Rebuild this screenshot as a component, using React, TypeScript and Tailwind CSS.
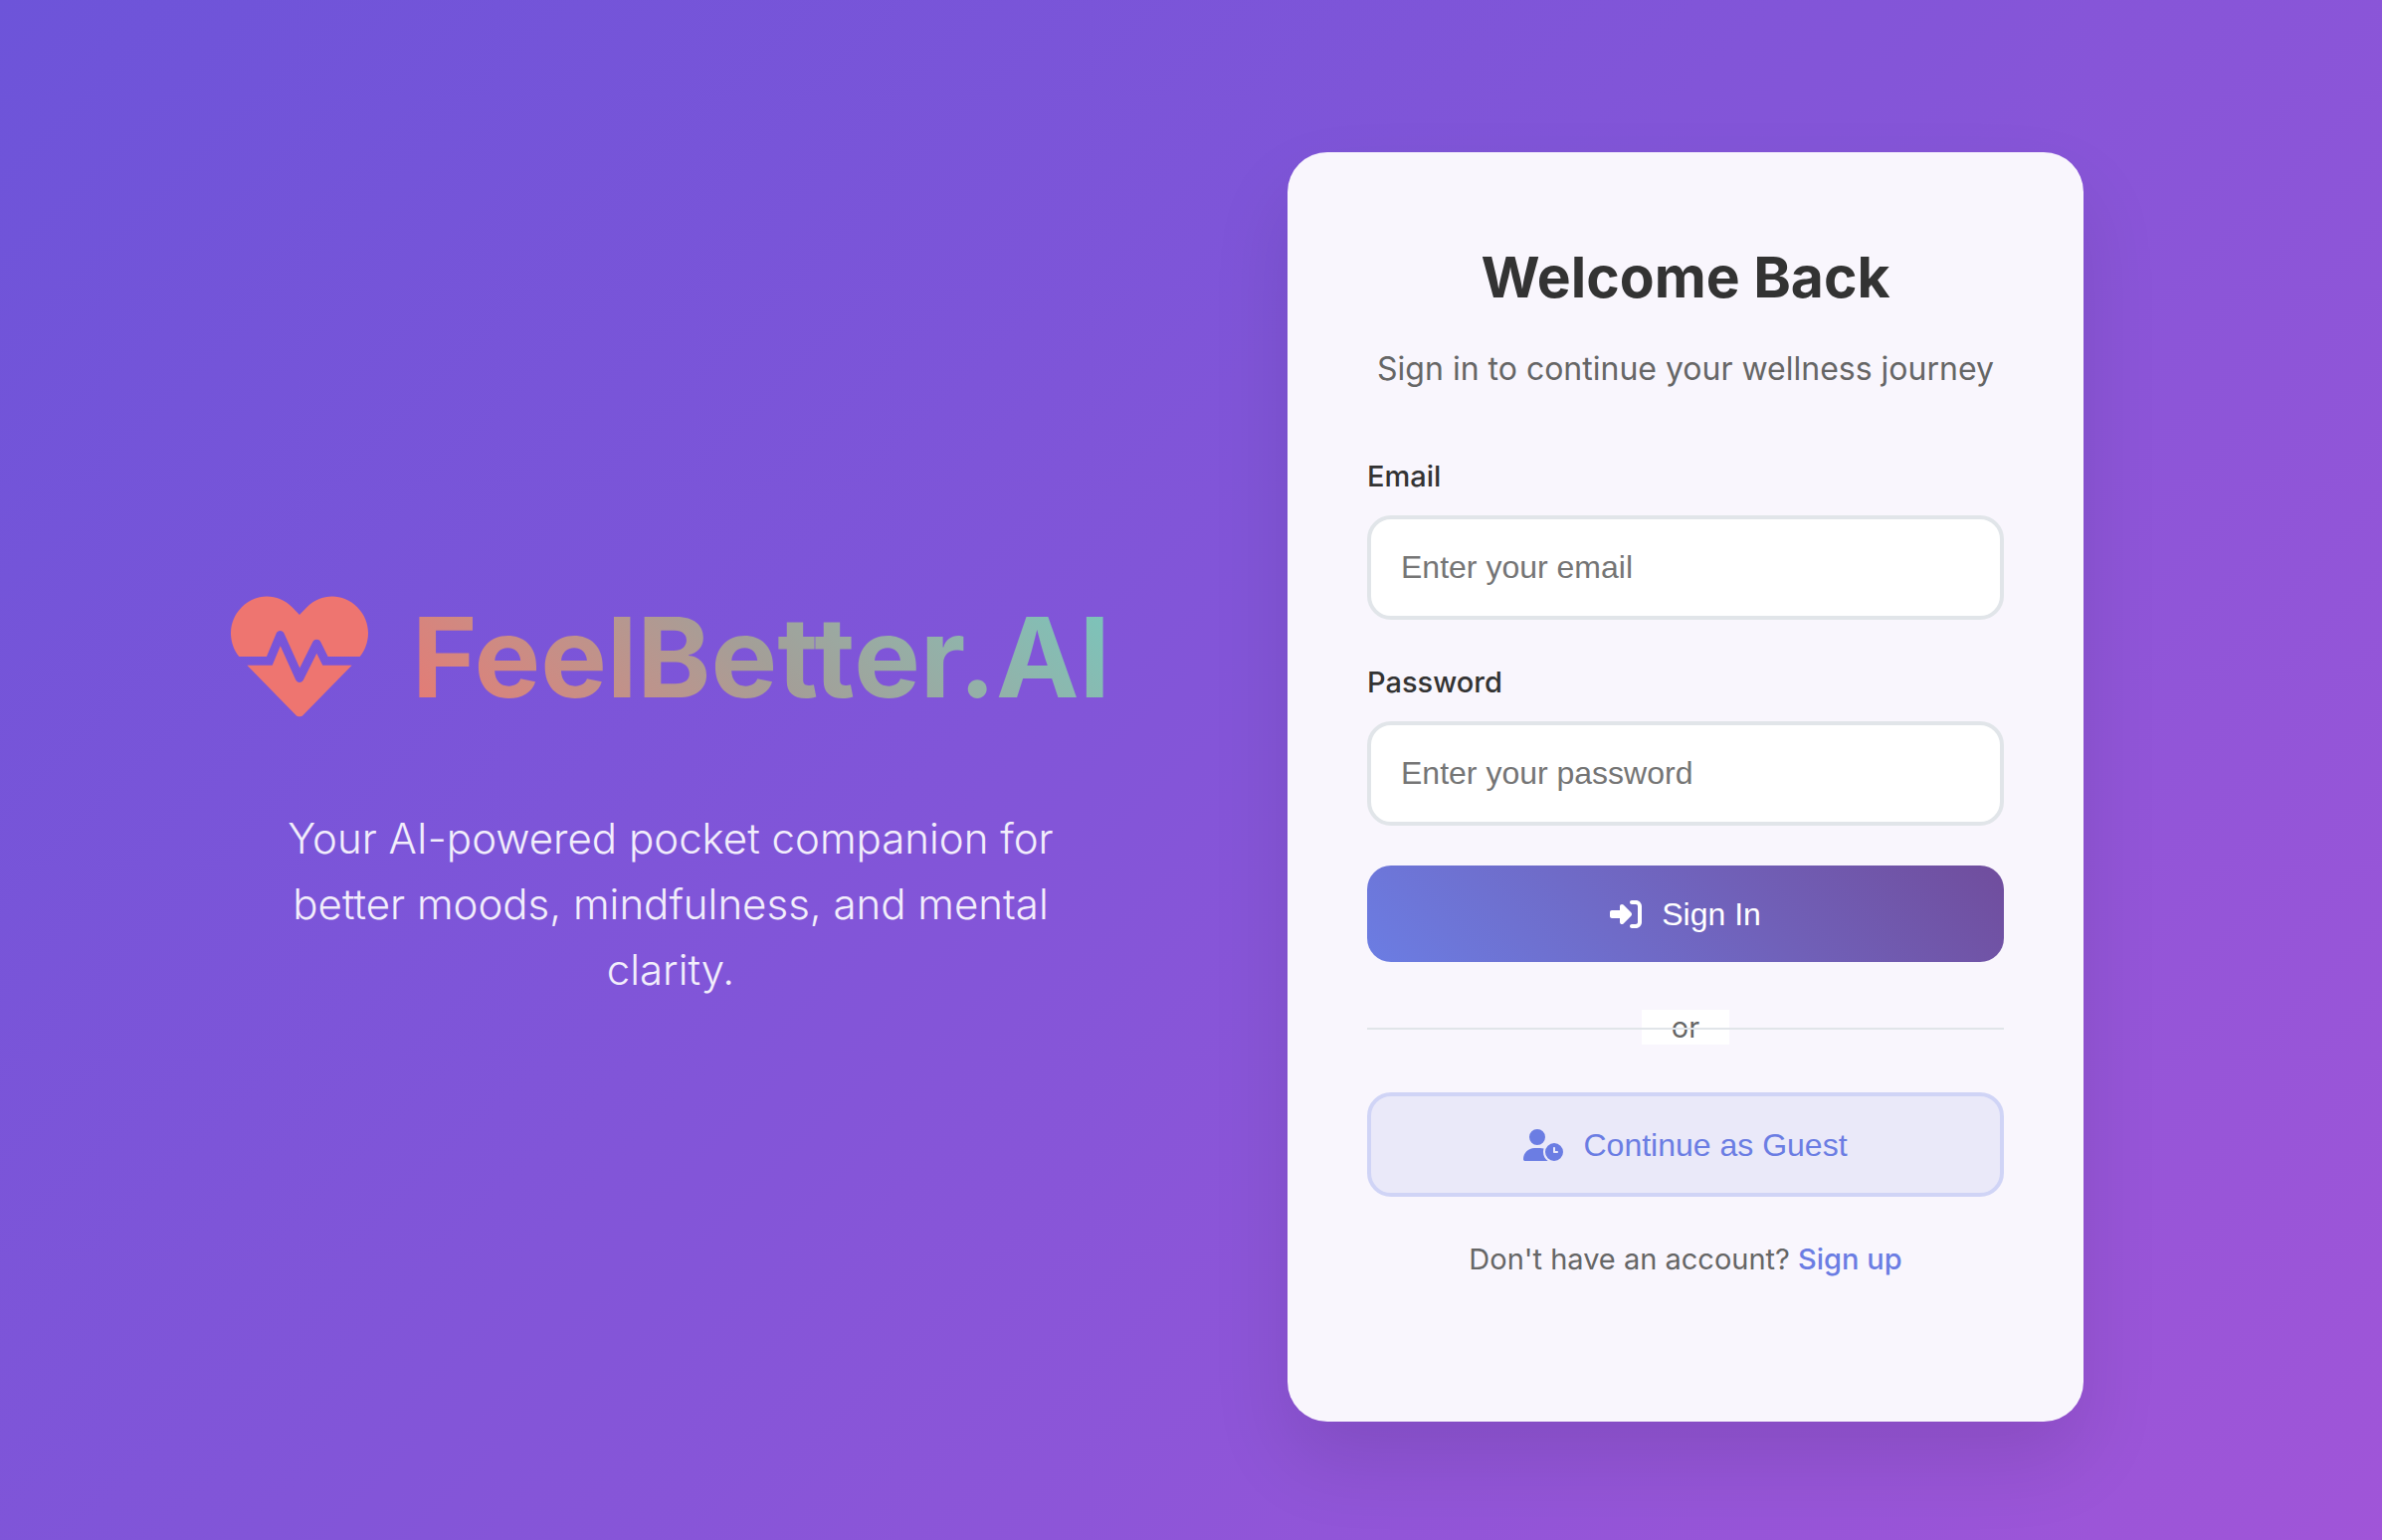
import React from "react";
import { FaHeartbeat } from "react-icons/fa";
import { FaRightToBracket, FaUserClock } from "react-icons/fa6";

function Field({ id, label, type, placeholder }: { id: string; label: string; type: string; placeholder: string }) {
  return (
    <div className="mb-10">
      <label htmlFor={id} className="mb-4 block text-[29px] leading-[46px] font-medium text-[#333]">{label}</label>
      <input
        id={id}
        type={type}
        placeholder={placeholder}
        className="block h-[105px] w-full rounded-3xl border-4 border-[#e1e5e9] bg-white px-[30px] font-['Liberation_Sans',sans-serif] text-[32px] text-[#333] placeholder:text-[#757575]"
      />
    </div>
  );
}

export default function App() {
  return (
    <main className="flex min-h-screen items-center justify-between bg-linear-135 from-[#6d54d9] via-[#8455d8] to-[#a055d8] pt-[153px] pr-[300px] pb-[119px] pl-[174px] font-[Inter,sans-serif]">
      <section className="max-w-[1000px] flex-1 pb-1 text-center">
        <h1 className="flex items-center justify-center gap-11 text-[112px] leading-[180px] font-bold">
          <FaHeartbeat className="size-[138px] text-[#ee7570]" aria-hidden="true" />
          <span className="bg-linear-45 from-[#ea7671] via-[#a39f98] to-[#74c8be] bg-clip-text text-transparent">FeelBetter.AI</span>
        </h1>
        <p className="mx-auto mt-[60px] max-w-[800px] text-[42px] leading-[66px] font-light text-white/90">
          Your AI-powered pocket companion for better moods, mindfulness, and mental clarity.
        </p>
      </section>
      <section className="w-[800px] shrink-0 rounded-[40px] bg-[#f9f6fd] px-20 pt-20 pb-[140px] shadow-[0_40px_80px_rgba(0,0,0,0.1)]">
        <h2 className="text-center text-[57px] leading-[92px] font-bold text-[#333]">Welcome Back</h2>
        <p className="mt-5 text-center text-[32px] leading-[51px] text-[#666]">Sign in to continue your wellness journey</p>
        <form className="mt-[60px]" onSubmit={(e) => e.preventDefault()}>
          <Field id="email" label="Email" type="email" placeholder="Enter your email" />
          <Field id="password" label="Password" type="password" placeholder="Enter your password" />
          <button type="submit" className="flex h-[97px] w-full items-center justify-center gap-5 rounded-3xl bg-linear-45 from-[#6b7de3] to-[#704d9d] font-['Liberation_Sans',sans-serif] text-[32px] text-white">
            <FaRightToBracket aria-hidden="true" />Sign In
          </button>
        </form>
        <div className="relative my-10 flex h-[51px] items-center justify-center">
          <span className="bg-white px-[30px] text-[29px] leading-[35px] text-[#666]">or</span>
          <span className="absolute inset-x-0 top-1/2 h-0.5 bg-[#e1e5e9]" />
        </div>
        <button type="button" className="flex h-[105px] w-full items-center justify-center gap-5 rounded-3xl border-4 border-[#d0d4f6] bg-[#eae9f9] font-['Liberation_Sans',sans-serif] text-[32px] text-[#6b7de3]">
          <FaUserClock className="h-8 w-10" aria-hidden="true" />Continue as Guest
        </button>
        <p className="mt-10 text-center text-[29px] leading-[46px] text-[#666]">
          Don't have an account? <a href="#signup" className="font-medium text-[#6b7de3]">Sign up</a>
        </p>
      </section>
    </main>
  );
}
